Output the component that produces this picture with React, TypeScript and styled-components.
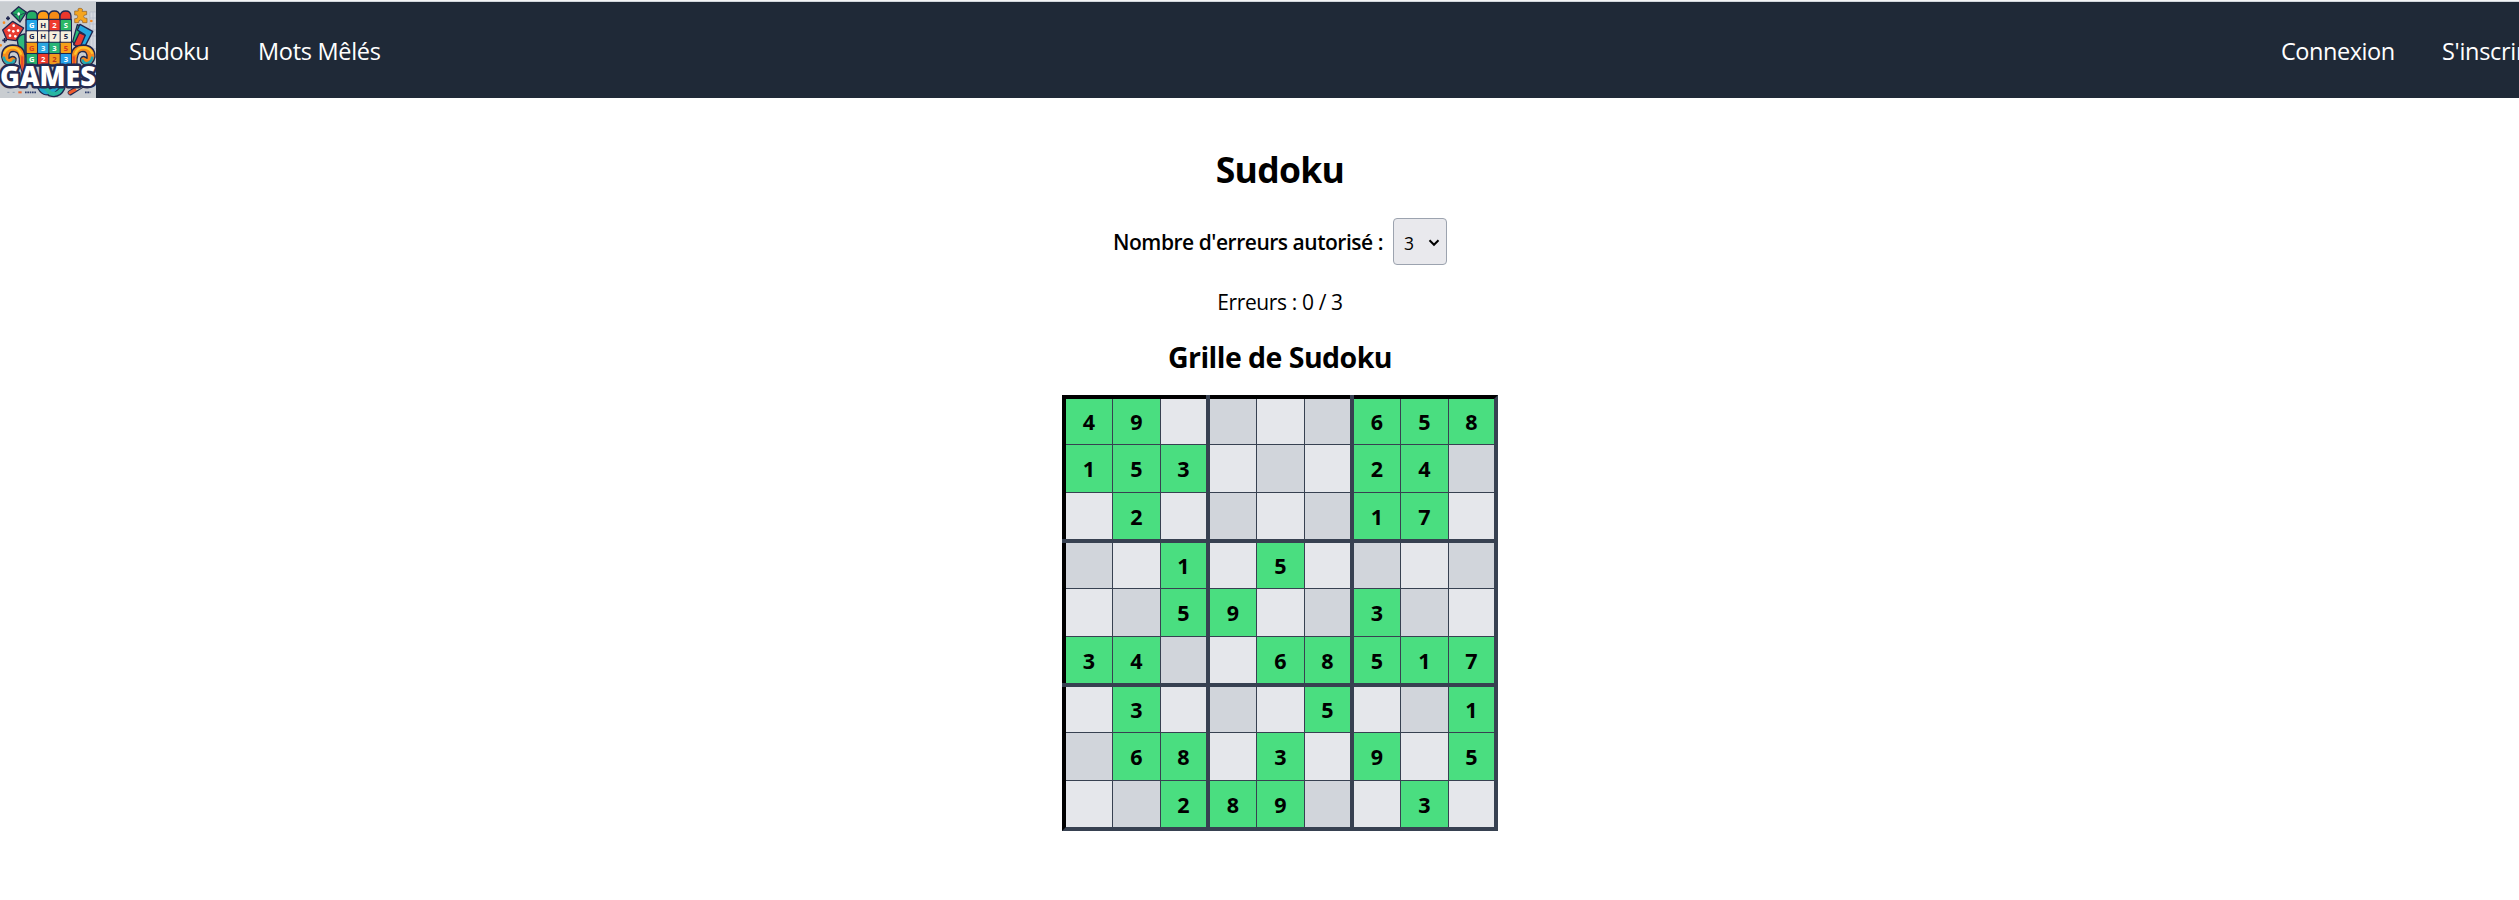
import React from "react";
import styled, { createGlobalStyle } from "styled-components";

const GlobalStyle = createGlobalStyle`
  *, *::before { box-sizing: border-box; }
  html { overflow: hidden; }
  body {
    margin: 0;
    background: #fff;
    color: #000;
    font-family: "Open Sans", "Noto Sans", sans-serif;
    overflow: hidden;
  }
  h1, h2, p { margin: 0; }
`;

const Page = styled.div`
  width: 2560px;
  height: 880px;
  border-top: 1px solid #f3f4f6;
`;

const Navbar = styled.nav`
  display: flex;
  align-items: center;
  height: 97px;
  border-top: 1px solid #d1d5db;
  background: #1f2937;
`;

const Logo = styled.svg`
  display: block;
  width: 96px;
  height: 96px;
  flex: none;
`;

const NavGroup = styled.div<{ $end?: boolean }>`
  display: flex;
  gap: 48px;
  padding-top: 2px;
  ${(p) => (p.$end ? "margin-left: auto; width: 279px;" : "margin-left: 33px;")}
`;

const NavLink = styled.a<{ $width: number; $spacing: number }>`
  flex: none;
  width: ${(p) => p.$width}px;
  color: #fff;
  font-size: 23.5px;
  line-height: 32px;
  letter-spacing: ${(p) => p.$spacing}px;
  white-space: nowrap;
`;

const Main = styled.main`
  display: flex;
  flex-direction: column;
  align-items: center;
  padding-top: 47px;
`;

const Title = styled.h1`
  font-size: 35.5px;
  font-weight: 700;
  line-height: 48px;
  letter-spacing: -0.7px;
`;

const Field = styled.div`
  display: flex;
  align-items: center;
  gap: 10px;
  margin-top: 25px;
  font-size: 21px;
  font-weight: 600;
  line-height: 32px;
  letter-spacing: -0.47px;
  white-space: nowrap;
`;

const Picker = styled.button`
  display: flex;
  align-items: center;
  justify-content: space-between;
  width: 54px;
  height: 47px;
  padding: 2px 6px 0 10px;
  border: 1px solid #9ca3af;
  border-radius: 4px;
  background: #e9e9ed;
  color: #000;
  font: 400 17.5px "Open Sans", sans-serif;
`;

const Errors = styled.p`
  margin-top: 21px;
  font-size: 21px;
  line-height: 32px;
  letter-spacing: -0.38px;
`;

const Subtitle = styled.h2`
  margin-top: 19px;
  font-size: 28.5px;
  font-weight: 700;
  line-height: 40px;
  letter-spacing: -0.54px;
`;

const Board = styled.div`
  display: grid;
  grid-template-columns: repeat(2, 47px 48px 49px) 47px 48px 45px;
  grid-template-rows: repeat(2, 46px 48px 50px) 46px 48px 46px;
  margin-top: 18px;
  border: 4px solid;
  border-color: #000 #374151 #374151 #000;
`;

const tones = { given: "#4ade80", light: "#e5e7eb", dark: "#d1d5db" };

const Cell = styled.div<{ $tone: keyof typeof tones; $row: number; $col: number }>`
  position: relative;
  display: flex;
  align-items: center;
  justify-content: center;
  padding-top: 1.4px;
  background: ${(p) => tones[p.$tone]};
  border: 0 solid #374151;
  border-right-width: ${(p) => (p.$col === 8 ? 0 : p.$col % 3 === 2 ? 4 : 1)}px;
  border-bottom-width: ${(p) => (p.$row === 8 ? 0 : p.$row % 3 === 2 ? 4 : 1)}px;
  font-size: 21.5px;
  font-weight: 700;
  line-height: 28px;

  ${(p) =>
    p.$row === 0 && (p.$col === 2 || p.$col === 5)
      ? `&::before { content: ""; position: absolute; top: -4px; right: -4px; width: 4px; height: 4px; background: #374151; }`
      : ""}
  ${(p) =>
    p.$col === 0 && (p.$row === 2 || p.$row === 5)
      ? `&::before { content: ""; position: absolute; bottom: -4px; left: -4px; width: 4px; height: 4px; background: #374151; }`
      : ""}
`;

/* Digits are given values; "." is a light empty cell and "-" a dark one. */
const rows = [
  "49.-.-658",
  "153.-.24-",
  ".2.-.-17.",
  "-.1.5.-.-",
  ".-59.-3-.",
  "34-.68517",
  ".3.-.5.-1",
  "-68.3.9.5",
  ".-289-.3.",
];

const toneOf = (c: string): keyof typeof tones => (c === "." ? "light" : c === "-" ? "dark" : "given");

const tiles = [
  ["G", "#22a7e8", "#fff"], ["H", "#f6efdc", "#20264c"], ["2", "#ef3b2d", "#fff"], ["S", "#2cb866", "#fff"],
  ["G", "#f6efdc", "#20264c"], ["H", "#f6efdc", "#20264c"], ["7", "#f6efdc", "#20264c"], ["5", "#f6efdc", "#20264c"],
  ["G", "#f49b14", "#d83b20"], ["3", "#2ba6e0", "#eaf6ff"], ["3", "#28b576", "#fff"], ["5", "#f4a019", "#d8321f"],
  ["G", "#26b06b", "#fff"], ["2", "#ee3a2b", "#fff"], ["2", "#f19a1d", "#b73319"], ["3", "#279fe8", "#fff"],
];

function GamesLogo() {
  return (
    <Logo viewBox="0 0 288 288" role="img" aria-label="Games">
      <rect width="288" height="288" fill="#c9cdd1" />
      <path d="M270 30h18v110h-18zM270 48h18M270 66h18M270 84h18M270 102h18M279 30v110" fill="#d6d9df" stroke="#a5afbd" strokeWidth="1.5" />
      <g stroke="#1f2750" strokeWidth="4" strokeLinejoin="round" strokeLinecap="round">
        <path d="M34 34L56 14L79 31L60 60Z" fill="#20aa63" />
        <path d="M34 34L58 40L79 31M58 40L60 60" fill="none" strokeWidth="2" />
        <path d="M8 84L38 58L71 78L48 116L20 112Z" fill="#e83b32" />
        <path d="M52 116Q54 98 75 96V165H60Z" fill="#2db97a" />
        <path d="M79 54V42Q80 27 96 27T112 42V54Z" fill="#23ae65" />
        <path d="M112 54V42Q114 27 130 27T146 42V54Z" fill="#ff9b16" />
        <path d="M146 54V42Q148 27 163 27T180 42V54Z" fill="#f58b17" />
        <path d="M180 54V42Q182 27 197 27T213 42V54Z" fill="#ec372c" />
      </g>
      <path d="M224 27H235Q231 18 241 19T246 28H260V38Q250 38 251 44T261 49V62H248Q249 54 242 54T236 62H224V50Q233 52 233 44T224 39Z" fill="#f5a51e" stroke="#8a5a26" strokeWidth="2" />
      <g stroke="#1f2750" strokeWidth="4" strokeLinejoin="round" strokeLinecap="round">
        <path d="M218 119L232 68L250 76L228 133Z" fill="#2abd78" />
        <path d="M232 84L240 67L278 88L250 143L234 136L254 98Z" fill="#24a8df" />
        <path d="M221 128L238 92L256 100L240 137Z" fill="#e93b31" />
        <path d="M75 200V160Q71 129 38 129Q5 131 5 165Q9 190 30 190Q50 185 48 169Q39 158 27 169Q25 145 44 149Q60 151 58 184L67 212Z" fill="#f68a1d" />
        <path d="M213 200V160Q217 129 250 129Q285 131 285 165Q279 190 260 190Q238 185 242 169Q249 158 261 169Q263 145 244 149Q230 151 231 184L222 212Z" fill="#f68a1d" />
      </g>
      <path d="M12 155Q19 137 38 136Q57 137 64 158" fill="none" stroke="#ffc52b" strokeWidth="7" />
      <path d="M225 158Q231 137 250 136Q270 137 278 155" fill="none" stroke="#ffc52b" strokeWidth="7" />
      <path d="M11 164Q13 183 30 184Q43 182 42 172M277 164Q275 183 260 184Q247 182 248 172" fill="none" stroke="#20aab5" strokeWidth="8" />
      <path d="M67 163Q65 190 70 208M221 163Q224 190 218 208" fill="none" stroke="#e94b2b" strokeWidth="7" />
      <rect x="76" y="50" width="140" height="144" rx="4" fill="#1c2450" />
      {tiles.map(([letter, fill, color], i) => {
        const x = 80 + (i % 4) * 34;
        const y = 54 + Math.floor(i / 4) * 34;
        return (
          <g key={i}>
            <rect x={x} y={y} width="31" height="31" rx="2" fill={fill} />
            <text x={x + 15.5} y={y + 23.5} textAnchor="middle" fill={color} fontSize="23" fontWeight="700" fontFamily="Open Sans, sans-serif">
              {letter}
            </text>
          </g>
        );
      })}
      <g fill="#fff">
        <circle cx="27" cy="85" r="4" /><circle cx="41" cy="71" r="4" /><circle cx="40" cy="88" r="4" />
        <circle cx="54" cy="86" r="4" /><circle cx="30" cy="101" r="4" /><circle cx="46" cy="103" r="4" />
        <ellipse cx="56" cy="36" rx="4" ry="5" />
      </g>
      <path d="M18 49H30M24 43V55M7 115H21M14 108V122" stroke="#1f2750" strokeWidth="5" />
      <g fill="#f58a22"><circle cx="12" cy="62" r="4" /><circle cx="274" cy="57" r="4" /><circle cx="2" cy="130" r="4" /></g>
      <g fill="none" stroke="#1f2750" strokeWidth="20" strokeLinecap="round">
        <path d="M119 250Q130 280 158 266L181 246M186 258Q175 281 151 274L130 250" />
        <path d="M211 272L243 252" strokeWidth="16" />
      </g>
      <path d="M119 250Q130 280 158 266L181 246" fill="none" stroke="#20a8cf" strokeWidth="13" strokeLinecap="round" />
      <path d="M186 258Q175 281 151 274L130 250" fill="none" stroke="#27b6a1" strokeWidth="12" strokeLinecap="round" />
      <path d="M210 272L226 263" stroke="#ef5b2d" strokeWidth="10" strokeLinecap="round" />
      <path d="M228 261L245 252" stroke="#f7e5c5" strokeWidth="9" />
      <text x="0" y="252" textLength="287" lengthAdjust="spacingAndGlyphs" fill="#fff" stroke="#242a50" strokeWidth="15" strokeLinejoin="round" paintOrder="stroke" fontSize="84" fontWeight="800" fontFamily="Open Sans, sans-serif">GAMES</text>
      <path d="M75 271H110M255 271H271" stroke="#30416f" strokeWidth="5" strokeDasharray="5 2" />
      <path d="M55 271H65" stroke="#ef672e" strokeWidth="6" />
      <path d="M22 271H28M38 271H44" stroke="#8c9db1" strokeWidth="3" />
    </Logo>
  );
}

export default function App() {
  return (
    <>
      <GlobalStyle />
      <Page>
        <Navbar>
          <GamesLogo />
          <NavGroup>
            <NavLink $width={81} $spacing={-0.4}>Sudoku</NavLink>
            <NavLink $width={124} $spacing={-0.3}>Mots Mêlés</NavLink>
          </NavGroup>
          <NavGroup $end>
            <NavLink $width={113} $spacing={-0.45}>Connexion</NavLink>
            <NavLink $width={90} $spacing={-0.3}>S'inscrire</NavLink>
          </NavGroup>
        </Navbar>
        <Main>
          <Title>Sudoku</Title>
          <Field>
            <span>Nombre d'erreurs autorisé :</span>
            <Picker type="button">
              3
              <svg width="12" height="8" viewBox="0 0 12 8" fill="none" stroke="#000" strokeWidth="2">
                <path d="M1.5 1.2L6 5.8L10.5 1.2" />
              </svg>
            </Picker>
          </Field>
          <Errors>Erreurs : 0 / 3</Errors>
          <Subtitle>Grille de Sudoku</Subtitle>
          <Board>
            {rows.map((line, r) =>
              line.split("").map((c, i) => (
                <Cell key={`${r}-${i}`} $row={r} $col={i} $tone={toneOf(c)}>
                  {toneOf(c) === "given" ? c : null}
                </Cell>
              )),
            )}
          </Board>
        </Main>
      </Page>
    </>
  );
}
